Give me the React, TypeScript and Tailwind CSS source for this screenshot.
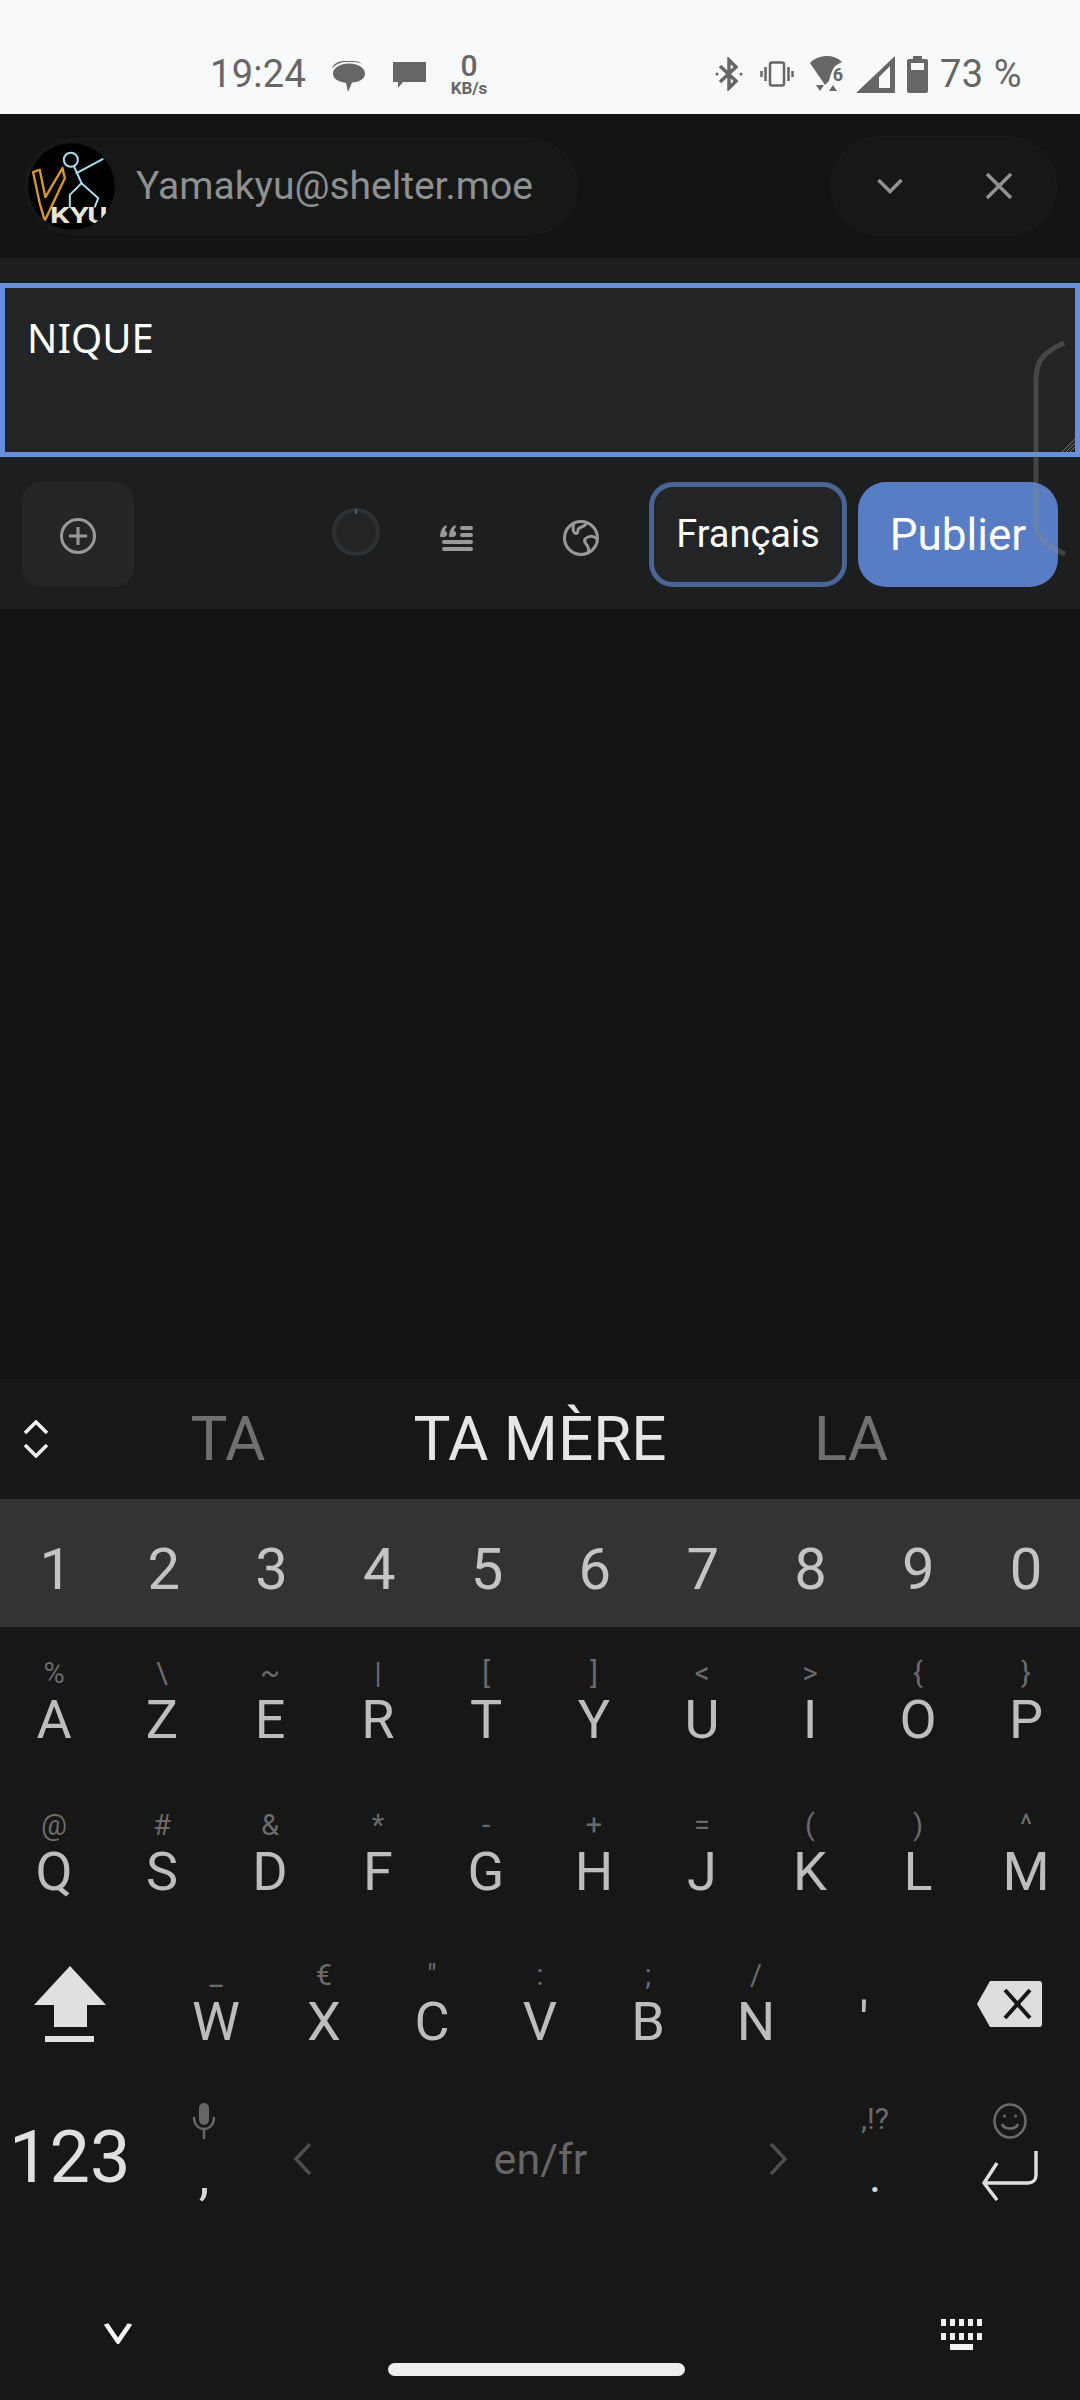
const row1 = [
  ['%', 'A'], ['\\', 'Z'], ['~', 'E'], ['|', 'R'], ['[', 'T'],
  [']', 'Y'], ['<', 'U'], ['>', 'I'], ['{', 'O'], ['}', 'P'],
]
const row2 = [
  ['@', 'Q'], ['#', 'S'], ['&', 'D'], ['*', 'F'], ['-', 'G'],
  ['+', 'H'], ['=', 'J'], ['(', 'K'], [')', 'L'], ['^', 'M'],
]
const row3 = [
  ['_', 'W'], ['€', 'X'], ['"', 'C'], [':', 'V'], [';', 'B'], ['/', 'N'], ['', "'"],
]

const Key = ({ hint, label }: { hint: string; label: string }) => (
  <div className="flex flex-col items-center pt-[28px]">
    <span className="h-[38px] text-[29px] leading-[36px] text-[#6b6b6b]">{hint}</span>
    <span className="h-[54px] text-[54px] leading-[54px] text-[#bdbdbd]">{label}</span>
  </div>
)

const Avatar = () => (
  <svg viewBox="80 60 260 260" className="w-[87px] h-[87px] rounded-full shrink-0">
    <circle cx="210" cy="190" r="130" fill="#000" />
    <path d="M95 147 L115 140 L132 222 L183 135 L190 165 L130 292 L115 240 Z" fill="none" stroke="#d8962c" strokeWidth="7" strokeLinejoin="round" />
    <g fill="none" stroke="#a9dcec" strokeWidth="6" strokeLinecap="round" strokeLinejoin="round">
      <circle cx="208" cy="110" r="21" />
      <path d="M218 131 L240 180 L205 215 L205 250" />
      <path d="M240 180 L290 225 L280 250" />
      <path d="M225 150 L303 108" />
    </g>
    <text x="146" y="299" fontSize="68" fontWeight="700" fill="#ece4d4" fontFamily="Roboto, sans-serif" textLength="172" lengthAdjust="spacingAndGlyphs">KYU</text>
  </svg>
)

export default function App() {
  return (
    <div className="relative w-[1080px] h-[2400px] overflow-hidden bg-[#121414] font-['Roboto',sans-serif]">
      {/* status bar */}
      <div className="h-[114px] bg-[#f8f9fb] flex items-start justify-between pl-[210px] pr-[58px] text-[#666666]">
        <div className="flex items-center h-[114px] pt-[34px]">
          <span className="text-[38px] leading-[38px] w-[97px] tracking-[0.3px]">19:24</span>
          <svg viewBox="0 0 33 31" className="w-[33px] h-[31px] ml-[25px] mt-[4px]" fill="#666666">
            <path d="M0 8 C1 3 6 0 12 0 H21 C25 0 28 1 30 3 C27 1.500 24 1 20 1 H13 C8 1 3 4 0 8 Z" />
            <path d="M17 2.500 C26 2.500 33 7 33 12.500 C33 18 27 21 20 21.500 L16 31 L14 22 C7 21 1 18 1 12.500 C1 7 8 2.500 17 2.500 Z" />
          </svg>
          <svg viewBox="0 0 33 26" className="w-[33px] h-[26px] ml-[28px] mt-[2px]" fill="#666666">
            <path d="M0 0 H33 V20 H10 L5 26 V20 H0 Z" />
          </svg>
          <div className="flex flex-col items-center w-[42px] ml-[22px] font-bold">
            <span className="text-[30px] leading-[25px] font-medium">0</span>
            <span className="text-[17px] leading-[16px] mt-[2px]">KB/s</span>
          </div>
        </div>
        <div className="flex items-center h-[114px] pt-[34px]">
          <svg viewBox="0 0 28 34" className="w-[28px] h-[34px]" fill="none" stroke="#666666" strokeWidth="3.500">
            <path d="M5 9 L21 24 L14 31 V3 L21 10 L5 25" />
            <circle cx="2" cy="17" r="1.500" fill="#666666" stroke="none" />
            <circle cx="26" cy="17" r="1.500" fill="#666666" stroke="none" />
          </svg>
          <svg viewBox="0 0 34 26" className="w-[34px] h-[26px] ml-[17px]" fill="none" stroke="#666666" strokeWidth="2.500">
            <rect x="10" y="1.500" width="14" height="23" rx="2" />
            <path d="M5.500 6 V20 M1.500 10 V16 M28.500 6 V20 M32.500 10 V16" />
          </svg>
          <svg viewBox="0 0 36 36" className="w-[36px] h-[36px] ml-[16px]" fill="#666666">
            <path d="M0 7 C9 -2 24 -2 32 6 L25 10 C22 14 20 20 19 25 L15 29 Z" />
            <text x="28" y="25" fontSize="18" fontWeight="700" fontFamily="Roboto, sans-serif" textAnchor="middle">6</text>
            <path d="M6 29 H14 L10 35 Z M19 35 H27 L23 29 Z" />
          </svg>
          <svg viewBox="0 0 39 37" className="w-[39px] h-[37px] ml-[10px]" fill="#666666">
            <path fillRule="evenodd" d="M39 0 V37 H0 Z M34 10 L23 21 V32 H34 Z" />
          </svg>
          <svg viewBox="0 0 21 37" className="w-[21px] h-[37px] ml-[12px]" fill="#666666">
            <path fillRule="evenodd" d="M6 0 H15 V3 H19 C20 3 21 4 21 5 V35 C21 36 20 37 19 37 H2 C1 37 0 36 0 35 V5 C0 4 1 3 2 3 H6 Z M4 7 V14 H17 V7 Z" />
          </svg>
          <span className="text-[38px] leading-[38px] ml-[12px] tracking-[0.5px]">73 %</span>
        </div>
      </div>

      {/* account bar */}
      <div className="h-[144px] bg-[#121414] flex items-center justify-between pl-[25px] pr-[23px]">
        <div className="w-[553px] h-[97px] rounded-full bg-[#161818] border border-[#1a1c1c] flex items-center pl-[2px]">
          <Avatar />
          <span className="ml-[21px] text-[39px] leading-[44px] text-[#8f9091]">Yamakyu@shelter.moe</span>
        </div>
        <div className="w-[227px] h-[100px] rounded-full bg-[#161818] border border-[#1a1c1c] flex items-center pl-[46px]">
          <svg viewBox="0 0 26 16" className="w-[26px] h-[16px]" fill="none" stroke="#909294" strokeWidth="3.500">
            <path d="M1.500 2 L13 13.500 L24.500 2" />
          </svg>
          <svg viewBox="0 0 28 28" className="w-[28px] h-[28px] ml-[82px]" fill="none" stroke="#909294" strokeWidth="3.500">
            <path d="M2 2 L26 26 M26 2 L2 26" />
          </svg>
        </div>
      </div>

      {/* compose panel */}
      <div className="h-[351px] bg-[#1c1e20] pt-[25px]">
        <div className="relative h-[174px] bg-[#222426] border-[5px] border-[#6690dc] pl-[22px] pt-[26px] text-[40px] leading-[48px] text-white font-['Noto_Sans',sans-serif]">
          NIQUE
          <svg viewBox="0 0 14 14" className="absolute right-0 bottom-0 w-[14px] h-[14px]" stroke="#777777" strokeWidth="1" fill="none">
            <path d="M1 14 L14 1 M5 14 L14 5 M9 14 L14 9" />
          </svg>
        </div>
        <div className="flex items-center h-[105px] mt-[25px] pl-[22px]">
          <div className="w-[112px] h-[105px] rounded-[20px] bg-[#232527] flex items-center justify-center">
            <svg viewBox="0 0 36 36" className="w-[36px] h-[36px] mt-[2px]" fill="none" stroke="#999999" strokeWidth="3">
              <circle cx="18" cy="18" r="16.500" />
              <path d="M18 9 V27 M9 18 H27" />
            </svg>
          </div>
          <svg viewBox="0 0 48 48" className="w-[48px] h-[48px] ml-[198px] -mt-[5px]" fill="#222426" stroke="#2e3133" strokeWidth="4">
            <circle cx="24" cy="24" r="22" />
            <path d="M24 1 V6" stroke="#6690dc" strokeWidth="1" />
          </svg>
          <svg viewBox="0 0 33 27" className="w-[33px] h-[27px] ml-[60px] mt-[5px]" fill="#999999">
            <path d="M0 13 C0 8 2 3 6 1 L7 3 C5 5 5 6 5 7 C8 7 8 13 4 13 Z M9 13 C9 8 11 3 15 1 L16 3 C14 5 14 6 14 7 C17 7 17 13 13 13 Z" />
            <rect x="20" y="2" width="13" height="4" rx="2" />
            <rect x="20" y="9" width="13" height="4" rx="2" />
            <rect x="2" y="16" width="31" height="4" rx="2" />
            <rect x="2" y="23" width="31" height="4" rx="2" />
          </svg>
          <svg viewBox="0 0 36 36" className="w-[36px] h-[36px] ml-[90px] mt-[7px]" fill="none" stroke="#999999" strokeWidth="3">
            <circle cx="18" cy="18" r="16.500" />
            <path d="M11 3 C10 7 9 9 11 12 C13 15 15 13 15 10 C15 7 19 8 22 5 L24 3" />
            <path d="M34 19 C30 15 25 16 22 19 C20 22 24 24 25 27 C26 29 26 31 25 33" />
          </svg>
          <div className="w-[198px] h-[105px] ml-[50px] rounded-[24px] border-[5px] border-[#4a6494] bg-[#222426] flex items-center justify-center text-[38px] text-white">
            Français
          </div>
          <div className="w-[200px] h-[105px] ml-[11px] rounded-[28px] bg-[#587dc4] flex items-center justify-center text-[44px] text-white">
            Publier
          </div>
        </div>
      </div>

      {/* page body */}
      <div className="h-[770px] bg-[#121414]" />

      {/* keyboard */}
      <div className="h-[1021px] bg-[#171717]">
        <div className="h-[120px] relative flex items-center">
          <svg viewBox="0 0 26 38" className="absolute left-[23px] top-[41px] w-[26px] h-[38px]" fill="none" stroke="#f0f0f0" strokeWidth="3.500">
            <path d="M2 13 L13 2 L24 13 M2 25 L13 36 L24 25" />
          </svg>
          <span className="absolute left-[128px] w-[200px] text-center text-[62px] leading-[68px] text-[#707070]">TA</span>
          <span className="absolute left-[340px] w-[400px] text-center text-[62px] leading-[68px] text-[#e6e6e6]">TA MÈRE</span>
          <span className="absolute left-[751px] w-[200px] text-center text-[62px] leading-[68px] text-[#707070]">LA</span>
        </div>
        <div className="h-[128px] bg-[#333333] grid grid-cols-10 items-center pt-[12px] pl-[2px]">
          {['1', '2', '3', '4', '5', '6', '7', '8', '9', '0'].map((n) => (
            <span key={n} className="text-center text-[58px] leading-[64px] text-[#c4c4c4]">{n}</span>
          ))}
        </div>
        <div className="h-[152px] grid grid-cols-10">
          {row1.map(([h, l]) => <Key key={l} hint={h} label={l} />)}
        </div>
        <div className="h-[150px] grid grid-cols-10">
          {row2.map(([h, l]) => <Key key={l} hint={h} label={l} />)}
        </div>
        <div className="h-[150px] flex">
          <div className="w-[162px] flex justify-start pl-[34px] pt-[37px]">
            <svg viewBox="0 0 72 76" className="w-[72px] h-[76px]" fill="#e0e0e0">
              <path d="M36 0 L72 39 H53 V61 H20 V39 H0 Z" />
              <rect x="11" y="70" width="49" height="6" />
            </svg>
          </div>
          <div className="w-[756px] grid grid-cols-7">
            {row3.map(([h, l]) => <Key key={l} hint={h} label={l} />)}
          </div>
          <div className="w-[162px] flex justify-start pl-[59px] pt-[52px]">
            <svg viewBox="0 0 65 46" className="w-[65px] h-[46px]">
              <path d="M13 0 H62 C64 0 65 1 65 3 V43 C65 45 64 46 62 46 H13 L0 23 Z" fill="#dddddd" />
              <path d="M28 9 L53 37 M53 9 L28 37" stroke="#171717" strokeWidth="4" fill="none" />
            </svg>
          </div>
        </div>
        <div className="h-[153px] flex">
          <div className="w-[148px] text-[72px] leading-[80px] pt-[39px] pl-[9px] text-[#e0e0e0]">123</div>
          <div className="w-[112px] flex flex-col items-center pt-[24px]">
            <svg viewBox="0 0 24 36" className="w-[24px] h-[36px]" fill="none" stroke="#666666" strokeWidth="2.500">
              <rect x="7" y="0" width="10" height="22" rx="5" fill="#666666" stroke="none" />
              <path d="M2 14 C2 22 7 26 12 26 C17 26 22 22 22 14 M12 26 V36" />
            </svg>
            <span className="text-[54px] leading-[50px] mt-[12px] text-[#d8d8d8]">,</span>
          </div>
          <div className="w-[560px] flex items-center justify-between pl-[33px] pr-[32px] pt-[6px]">
            <svg viewBox="0 0 19 32" className="w-[19px] h-[32px]" fill="none" stroke="#4d4d4d" strokeWidth="3.500">
              <path d="M17 1 L3 16 L17 31" />
            </svg>
            <span className="text-[43px] leading-[50px] text-[#666666]">en/fr</span>
            <svg viewBox="0 0 19 32" className="w-[19px] h-[32px]" fill="none" stroke="#4d4d4d" strokeWidth="3.500">
              <path d="M2 1 L16 16 L2 31" />
            </svg>
          </div>
          <div className="w-[110px] flex flex-col items-center pt-[22px]">
            <span className="text-[30px] leading-[36px] text-[#6b6b6b]">,!?</span>
            <span className="text-[46px] leading-[50px] mt-[14px] text-[#d8d8d8]">.</span>
          </div>
          <div className="w-[150px] flex flex-col items-start pl-[63px] pt-[24px]">
            <svg viewBox="0 0 34 36" className="w-[34px] h-[36px]" fill="none" stroke="#6b6b6b" strokeWidth="2.500">
              <ellipse cx="17" cy="18" rx="15.500" ry="16.500" />
              <circle cx="11.500" cy="13" r="1.500" fill="#6b6b6b" stroke="none" />
              <circle cx="22.500" cy="13" r="1.500" fill="#6b6b6b" stroke="none" />
              <path d="M9 21 C11 27 23 27 25 21" />
            </svg>
            <svg viewBox="0 0 58 50" className="w-[58px] h-[50px] -ml-[12px] mt-[12px]" fill="none" stroke="#dedede" strokeWidth="3.500" strokeLinejoin="round">
              <path d="M55 0 V24 C55 29 52 32 47 32 H3 M16 12 L3 32 L16 49" />
            </svg>
          </div>
        </div>

        {/* nav strip */}
        <div className="h-[168px] relative">
          <svg viewBox="0 0 28 34" className="absolute left-[104px] top-[90px] w-[28px] h-[22px]" fill="none" stroke="#f4f4f4" strokeWidth="5" preserveAspectRatio="none">
            <path d="M2 3 L14 30 L26 3" />
          </svg>
          <div className="absolute left-[941px] top-[87px] flex flex-col items-center gap-[4px]">
            <div className="grid grid-cols-5 gap-x-[4px] gap-y-[7px]">
              {Array.from({ length: 10 }).map((_, i) => (
                <div key={i} className="w-[5px] h-[7px] bg-[#f0f0f0]" />
              ))}
            </div>
            <div className="w-[23px] h-[6px] bg-[#f4f4f4]" />
          </div>
          <div className="absolute left-[388px] top-[131px] w-[297px] h-[13px] rounded-full bg-[#eeeeee]" />
        </div>
      </div>

      {/* system gesture hint laid over the panel */}
      <svg viewBox="0 0 40 220" className="absolute left-[1030px] top-[340px] w-[40px] h-[220px]" fill="none" stroke="#8a8a8a" strokeOpacity="0.35" strokeWidth="5">
        <path d="M34 3 C14 12 6 20 6 40 V185 C6 198 20 208 35 214" />
      </svg>
    </div>
  )
}
